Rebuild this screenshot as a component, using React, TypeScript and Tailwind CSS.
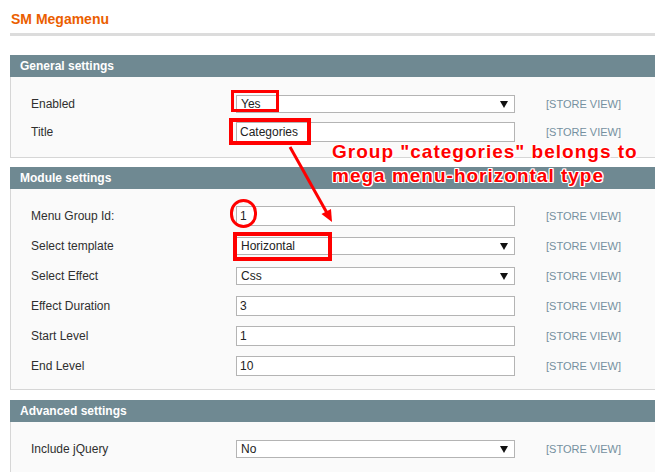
import React from "react";

type Field = {
  label: string;
  value: string;
  kind: "select" | "text";
};

const general: Field[] = [
  { label: "Enabled", value: "Yes", kind: "select" },
  { label: "Title", value: "Categories", kind: "text" },
];

const module: Field[] = [
  { label: "Menu Group Id:", value: "1", kind: "text" },
  { label: "Select template", value: "Horizontal", kind: "select" },
  { label: "Select Effect", value: "Css", kind: "select" },
  { label: "Effect Duration", value: "3", kind: "text" },
  { label: "Start Level", value: "1", kind: "text" },
  { label: "End Level", value: "10", kind: "text" },
];

const advanced: Field[] = [{ label: "Include jQuery", value: "No", kind: "select" }];

function Row({ field }: { field: Field }) {
  return (
    <div className="flex h-[20px] items-center">
      <div className="w-[205px] text-[12px] text-[#2f2f2f]">{field.label}</div>
      {field.kind === "select" ? (
        <div className="flex h-[18px] w-[279px] items-center justify-between border border-[#b4b4b4] bg-white pl-[4px] pr-[6px] text-[12px] text-[#222]">
          <span>{field.value}</span>
          <svg width="8" height="7" viewBox="0 0 8 7">
            <polygon points="0,0 8,0 4,7" fill="#111" />
          </svg>
        </div>
      ) : (
        <div className="flex h-[20px] w-[279px] items-center border border-[#b4b4b4] bg-white pl-[3px] text-[12px] text-[#222]">
          {field.value}
        </div>
      )}
      <div className="ml-[31px] text-[11px] text-[#7590a0]">[STORE VIEW]</div>
    </div>
  );
}

function Section({
  title,
  fields,
  gap,
  className,
}: {
  title: string;
  fields: Field[];
  gap: string;
  className?: string;
}) {
  return (
    <div className={"w-[660px] " + (className ?? "")}>
      <div className="h-[22px] bg-[#6f8992] px-[10px] text-[12px] font-bold leading-[22px] text-white">
        {title}
      </div>
      <div className={"flex flex-col border border-t-0 border-[#d6d6d6] bg-[#fafafa] pl-[20px] pt-[17px] " + gap}>
        {fields.map((f) => (
          <Row key={f.label} field={f} />
        ))}
      </div>
    </div>
  );
}

export default function App() {
  return (
    <div className="relative h-[472px] w-[655px] overflow-hidden bg-white pl-[10px] pt-[10px] font-['Liberation_Sans',Arial,sans-serif]">
      <h1 className="pl-[1px] text-[14px] font-bold leading-[18px] text-[#eb5e00]">SM Megamenu</h1>
      <div className="mt-[5px] h-[3px] w-[660px] bg-[#dcdcdc]" />

      <Section title="General settings" fields={general} gap="gap-[8px] pb-[15px]" className="mt-[19px]" />
      <Section title="Module settings" fields={module} gap="gap-[10px] pb-[13px]" className="mt-[9px]" />
      <Section title="Advanced settings" fields={advanced} gap="pb-[30px]" className="mt-[10px]" />

      {/* annotations */}
      <div className="absolute left-[231px] top-[90px] h-[22px] w-[48px] border-[3px] border-[#f00]" />
      <div className="absolute left-[229px] top-[118px] h-[27px] w-[82px] border-[4px] border-[#f00]" />
      <div className="absolute left-[230px] top-[199px] h-[29px] w-[27px] rounded-full border-[3px] border-[#f00]" />
      <div className="absolute left-[233px] top-[232px] h-[29px] w-[99px] border-[4px] border-[#f00]" />

      <svg className="absolute left-0 top-0" width="655" height="472" viewBox="0 0 655 472">
        <line x1="290" y1="147" x2="327" y2="213" stroke="#f00" strokeWidth="3" />
        <polygon points="332,222 321.5,214 331,209" fill="#f00" />
      </svg>

      <div className="absolute left-[332px] top-[140px] whitespace-nowrap text-[19px] font-bold leading-[24px] tracking-[1px] text-[#f00] [text-shadow:1px_1px_0_#fff,-1px_-1px_0_#fff,1px_-1px_0_#fff,-1px_1px_0_#fff,0_1px_0_#fff,0_-1px_0_#fff,1px_0_0_#fff,-1px_0_0_#fff]">
        <div>Group "categories" belongs to</div>
        <div>mega menu-horizontal type</div>
      </div>
    </div>
  );
}
